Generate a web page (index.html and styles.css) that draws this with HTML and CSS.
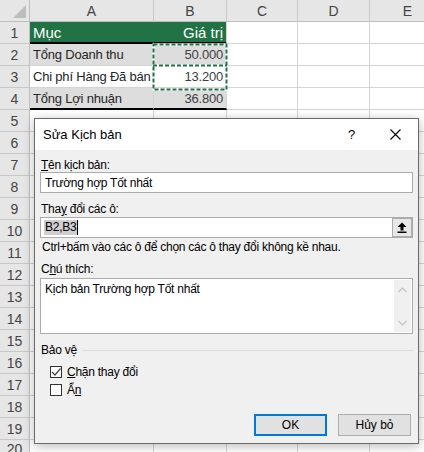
FILE: index.html
```html
<!DOCTYPE html>
<html lang="vi">
<head>
<meta charset="utf-8">
<title>Sửa Kịch bản</title>
<link rel="stylesheet" href="styles.css">
</head>
<body>
<div class="sheet">
  <div class="corner"><span class="tri"></span></div><div class="ch">A</div><div class="ch">B</div><div class="ch">C</div><div class="ch">D</div><div class="ch">E</div>
  <div class="rh">1</div><div class="hd hdA">Mục</div><div class="hd hdB">Giá trị</div><div></div><div></div><div></div>
  <div class="rh">2</div><div class="gr">Tổng Doanh thu</div><div class="gr num">50.000</div><div></div><div></div><div></div>
  <div class="rh">3</div><div>Chi phí Hàng Đã bán</div><div class="num">13.200</div><div></div><div></div><div></div>
  <div class="rh">4</div><div class="gr tot">Tổng Lợi nhuận</div><div class="gr num tot">36.800</div><div></div><div></div><div></div>
  <div class="rh">5</div><div></div><div></div><div></div><div></div><div></div>
  <div class="rh">6</div><div></div><div></div><div></div><div></div><div></div>
  <div class="rh">7</div><div></div><div></div><div></div><div></div><div></div>
  <div class="rh">8</div><div></div><div></div><div></div><div></div><div></div>
  <div class="rh">9</div><div></div><div></div><div></div><div></div><div></div>
  <div class="rh">10</div><div></div><div></div><div></div><div></div><div></div>
  <div class="rh">11</div><div></div><div></div><div></div><div></div><div></div>
  <div class="rh">12</div><div></div><div></div><div></div><div></div><div></div>
  <div class="rh">13</div><div></div><div></div><div></div><div></div><div></div>
  <div class="rh">14</div><div></div><div></div><div></div><div></div><div></div>
  <div class="rh">15</div><div></div><div></div><div></div><div></div><div></div>
  <div class="rh">16</div><div></div><div></div><div></div><div></div><div></div>
  <div class="rh">17</div><div></div><div></div><div></div><div></div><div></div>
  <div class="rh">18</div><div></div><div></div><div></div><div></div><div></div>
  <div class="rh">19</div><div></div><div></div><div></div><div></div><div></div>
  <div class="rh rlast">20</div><div></div><div></div><div></div><div></div><div></div>
</div>

<svg class="ants" width="76" height="48" viewBox="0 0 76 48">
  <rect x="1.5" y="1.5" width="73" height="45" fill="none" stroke="#fff" stroke-width="2.5"/>
  <line x1="1" y1="22.5" x2="75" y2="22.5" stroke="#fff" stroke-width="2.5"/>
  <rect x="1.5" y="1.5" width="73" height="45" fill="none" stroke="#217346" stroke-width="2" stroke-dasharray="4 2"/>
  <line x1="1" y1="22.5" x2="75" y2="22.5" stroke="#217346" stroke-width="2" stroke-dasharray="4 2"/>
</svg>

<div class="dlg">
  <div class="tbar">
    <span class="ttl">Sửa Kịch bản</span>
    <span class="help">?</span>
    <svg class="close" width="11" height="11" viewBox="0 0 11 11"><path d="M0.5 0.5 L10.5 10.5 M10.5 0.5 L0.5 10.5" stroke="#000" stroke-width="1.1" fill="none"/></svg>
  </div>
  <div class="dbody">
    <div class="lbl l1"><u>T</u>ên kịch bản:</div>
    <div class="inp">Trường hợp Tốt nhất</div>
    <div class="lbl l2">Tha<u>y</u> đổi các ô:</div>
    <div class="inp inp2">
      <span class="sel">B2,B3</span><span class="caret"></span>
      <span class="refbtn"><svg width="10" height="11" viewBox="0 0 10 11"><path d="M5 0.5 L9.5 5 H6.5 V8.5 H3.5 V5 H0.5 Z" fill="#000"/><rect x="0.5" y="9.5" width="9" height="1.5" fill="#000"/></svg></span>
    </div>
    <div class="hint">Ctrl+bấm vào các ô để chọn các ô thay đổi không kề nhau.</div>
    <div class="lbl l3">C<u>h</u>ú thích:</div>
    <div class="area">
      <div class="atext">Kịch bản Trường hợp Tốt nhất</div>
      <div class="vscroll">
        <svg width="9" height="6" viewBox="0 0 9 6"><path d="M0.5 5 L4.5 1 L8.5 5" stroke="#c2c2c2" stroke-width="1.2" fill="none"/></svg>
        <svg width="9" height="6" viewBox="0 0 9 6"><path d="M0.5 1 L4.5 5 L8.5 1" stroke="#c2c2c2" stroke-width="1.2" fill="none"/></svg>
      </div>
    </div>
    <div class="grp"><span>Bảo vệ</span><span class="gline"></span></div>
    <div class="chk c1"><span class="box"><svg width="10" height="10" viewBox="0 0 10 10"><path d="M1 5 L4 8 L9.5 1.5" stroke="#444" stroke-width="1.2" fill="none"/></svg></span><span><u>C</u>hặn thay đổi</span></div>
    <div class="chk c2"><span class="box"></span><span>Ẩ<u>n</u></span></div>
    <div class="btns"><button class="btn ok">OK</button><button class="btn">Hủy bỏ</button></div>
  </div>
</div>
</body>
</html>
```

FILE: styles.css
```css
* { box-sizing: border-box; }
body {
  margin: 0;
  width: 424px;
  height: 452px;
  overflow: hidden;
  position: relative;
  background: #fff;
  font-family: "Liberation Sans", Arial, sans-serif;
}
.sheet {
  display: grid;
  grid-template-columns: 30px 124px 73px 71px 72px 76px;
  grid-auto-rows: 22px;
  font-size: 13px;
  letter-spacing: -0.2px;
  color: #262626;
}
.sheet > div {
  border-right: 1px solid #d4d4d4;
  border-bottom: 1px solid #d4d4d4;
  display: flex;
  align-items: center;
  padding: 0 3px;
  white-space: nowrap;
  overflow: hidden;
}
.sheet > .corner {
  background: #e6e6e6;
  border-right-color: #bfbfbf;
  border-bottom-color: #bfbfbf;
  position: relative;
}
.tri {
  position: absolute;
  right: 3px;
  bottom: 3px;
  width: 0;
  height: 0;
  border-left: 13px solid transparent;
  border-bottom: 13px solid #bdbdbd;
}
.sheet > .ch {
  background: #e6e6e6;
  justify-content: center;
  color: #444;
  font-size: 14px;
  letter-spacing: 0;
  border-right-color: #c8c8c8;
  border-bottom-color: #bfbfbf;
}
.sheet > .rh {
  background: #e6e6e6;
  justify-content: center;
  color: #444;
  font-size: 14px;
  letter-spacing: 0;
  border-right-color: #bfbfbf;
  border-bottom-color: #c8c8c8;
}
.sheet > .rlast { align-items: flex-start; padding-top: 1px; }
.sheet > .hd {
  background: #217346;
  color: #fff;
  font-size: 15px;
  letter-spacing: 0;
  border-right-color: #217346;
  border-bottom: 2px solid #000;
}
.sheet > .hdB { justify-content: flex-end; border-right-color: #d4d4d4; }
.sheet > .gr { background: #dddddd; }
.sheet > .num { justify-content: flex-end; color: #404040; }
.sheet > .tot { border-bottom: 2px solid #000; }

.ants {
  position: absolute;
  left: 152px;
  top: 43px;
}

.dlg {
  position: absolute;
  left: 34px;
  top: 118px;
  width: 385px;
  height: 326px;
  border: 1px solid #6a6a6a;
  background: #f0f0f0;
  box-shadow: 0 2px 10px rgba(0,0,0,0.28);
  display: flex;
  flex-direction: column;
  font-family: "Liberation Sans", Arial, sans-serif;
  font-size: 12px;
  letter-spacing: -0.25px;
  color: #000;
}
.tbar {
  height: 31px;
  background: #fff;
  display: flex;
  align-items: center;
  padding-left: 8px;
}
.ttl { flex: 1; font-size: 13px; letter-spacing: 0; }
.help { margin-right: 35px; font-size: 13px; }
.close { margin-right: 17px; }
.dbody {
  flex: 1;
  display: flex;
  flex-direction: column;
  padding: 0 5px 7px 5px;
}
.lbl { line-height: 15px; padding-left: 1px; }
.l1 { padding-top: 8px; }
.l2 { padding-top: 9px; }
.l3 { padding-top: 6px; padding-bottom: 1px; }
.inp {
  height: 21px;
  background: #fff;
  border: 1px solid #ababab;
  display: flex;
  align-items: center;
  padding-left: 4px;
}
.l1 + .inp { margin-top: -1px; }
.inp2 { position: relative; padding-left: 3px; }
.sel { background: #cfcfcf; padding: 0 1px; line-height: 15px; }
.caret { width: 1px; height: 15px; background: #000; }
.refbtn {
  margin-left: auto;
  width: 20px;
  height: 19px;
  border: 1px solid #adadad;
  background: #e8e8e8;
  display: flex;
  align-items: center;
  justify-content: center;
}
.hint { padding-top: 2px; line-height: 15px; padding-bottom: 1px; padding-left: 2px; }
.area {
  height: 56px;
  background: #fff;
  border: 1px solid #ababab;
  display: flex;
  padding: 1px;
}
.atext { flex: 1; padding: 2px 0 0 3px; line-height: 15px; }
.vscroll {
  width: 17px;
  background: #f0f0f0;
  display: flex;
  flex-direction: column;
  justify-content: space-between;
  align-items: center;
  padding: 7px 0 6px;
}
.grp {
  display: flex;
  align-items: center;
  padding-top: 9px;
  line-height: 15px;
  padding-left: 1px;
}
.gline { flex: 1; height: 1px; background: #dcdcdc; margin-left: 5px; }
.chk { display: flex; align-items: center; height: 12px; padding-left: 10px; }
.c1 { margin-top: 8px; }
.c2 { margin-top: 6px; }
.box {
  width: 12px;
  height: 12px;
  border: 1px solid #333;
  background: #fff;
  margin-right: 5px;
  display: flex;
  align-items: center;
  justify-content: center;
}
.btns {
  margin-top: auto;
  display: flex;
  justify-content: flex-end;
  gap: 11px;
  padding-right: 2px;
}
.btn {
  width: 73px;
  height: 22px;
  background: #e1e1e1;
  border: 1px solid #adadad;
  font-family: "Liberation Sans", Arial, sans-serif;
  font-size: 12px;
  color: #000;
  padding: 0;
}
.btn.ok { border: 2px solid #0078d7; }
```
